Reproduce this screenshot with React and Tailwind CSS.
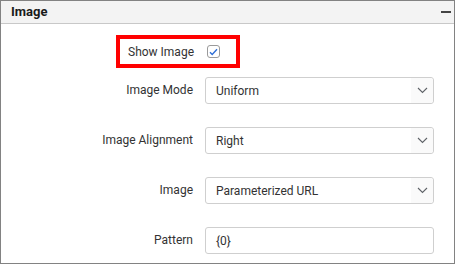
import { useState } from "react"

function Chevron() {
  return (
    <svg width="11" height="7" viewBox="0 0 11 7" fill="none" stroke="#5f6368" strokeWidth="1.1">
      <path d="M1 1l4.5 4.5L10 1" />
    </svg>
  )
}

function SelectBox({ value }) {
  return (
    <div className="flex h-[27px] w-[229px] items-center rounded-[3px] border border-[#cfcfcf] bg-white">
      <span className="flex-1 pl-[10px] text-[12px] text-[#333]">{value}</span>
      <span className="flex h-full w-[22px] items-center justify-center rounded-r-[3px] bg-[#fafafa]">
        <Chevron />
      </span>
    </div>
  )
}

function Row({ label, children }) {
  return (
    <div className="flex items-center gap-[12px]">
      <div className="w-[192px] pb-[2px] text-right text-[12px] text-[#333]">{label}</div>
      {children}
    </div>
  )
}

export default function App() {
  const [showImage, setShowImage] = useState(true)

  return (
    <div
      className="h-[264px] w-[455px] border border-[#828282] bg-white"
      style={{ fontFamily: "Roboto, 'Liberation Sans', sans-serif" }}
    >
      {/* Header */}
      <div className="flex h-[23px] items-center justify-between border-b border-[#c8c8c8] bg-[#f3f3f3] pl-[10px] pr-[3px]">
        <span className="text-[13px] font-bold text-[#1a1a1a]">Image</span>
        <span className="mb-[1px] block h-[2px] w-[10px] bg-[#444]" />
      </div>

      <div className="pt-[11px]">
        {/* Show Image */}
        <div className="ml-[115px] flex h-[33px] w-[124px] items-center justify-end gap-[13px] border-[4px] border-[#ff0000] pr-[16px]">
          <span className="text-[12px] text-[#333]">Show Image</span>
          <button
            onClick={() => setShowImage(!showImage)}
            className="flex h-[13px] w-[13px] items-center justify-center rounded-[3px] border border-[#9a9a9a] bg-white"
          >
            {showImage && (
              <svg width="9" height="8" viewBox="0 0 9 8" fill="none" stroke="#2f6fd6" strokeWidth="1.4">
                <path d="M1 4.2l2.2 2.2L8 1.3" />
              </svg>
            )}
          </button>
        </div>

        <div className="mt-[9px] flex flex-col gap-[23px]">
          <Row label="Image Mode">
            <SelectBox value="Uniform" />
          </Row>
          <Row label="Image Alignment">
            <SelectBox value="Right" />
          </Row>
          <Row label="Image">
            <SelectBox value="Parameterized URL" />
          </Row>
          <Row label="Pattern">
            <div className="flex h-[27px] w-[229px] items-center rounded-[3px] border border-[#cfcfcf] bg-white pl-[10px] text-[12px] text-[#333]">
              {"{0}"}
            </div>
          </Row>
        </div>
      </div>
    </div>
  )
}
